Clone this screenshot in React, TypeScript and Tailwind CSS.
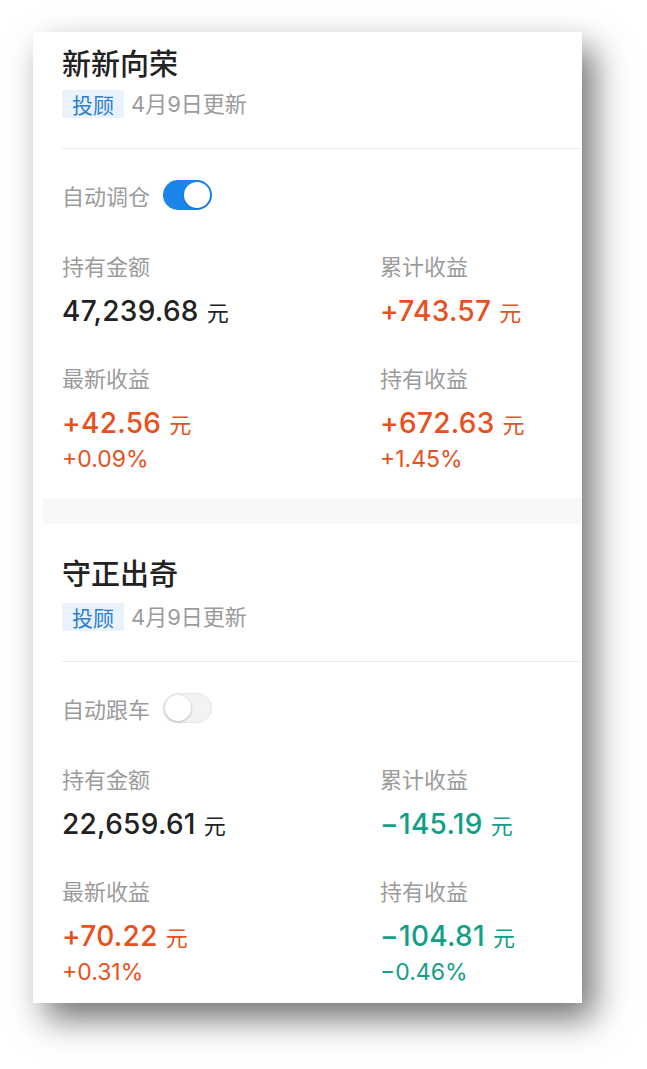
import React from "react";

type Tone = "dark" | "up" | "down";

const toneClass: Record<Tone, string> = {
  dark: "text-[#222222]",
  up: "text-[#e8501c]",
  down: "text-[#129f85]",
};

function Toggle({ on }: { on: boolean }) {
  return on ? (
    <div className="w-[49px] h-[30px] rounded-full bg-[#1a85e8] flex items-center justify-end pr-[2px]">
      <div className="w-[26px] h-[26px] rounded-full bg-white shadow-[0_1px_2px_rgba(0,0,0,0.2)]" />
    </div>
  ) : (
    <div className="w-[49px] h-[30px] rounded-full bg-[#f3f3f3] border border-[#e6e6e6] flex items-center pl-[1px]">
      <div className="w-[26px] h-[26px] rounded-full bg-white shadow-[0_1px_3px_rgba(0,0,0,0.25)]" />
    </div>
  );
}

function Stat({
  label,
  value,
  tone,
  pct,
}: {
  label: string;
  value: string;
  tone: Tone;
  pct?: string;
}) {
  return (
    <div className="flex flex-col">
      <div className="h-[30px] leading-[30px] text-[22px] text-[#9b9b9b] font-['Noto_Sans_CJK_SC',sans-serif]">
        {label}
      </div>
      <div className={`mt-[11px] h-[40px] leading-[40px] flex items-baseline ${toneClass[tone]}`}>
        <span className="text-[28px] font-medium font-['Inter','Liberation_Sans',sans-serif] tracking-[0.3px]">
          {value}
        </span>
        <span className="ml-[8px] text-[22px] font-['Noto_Sans_CJK_SC',sans-serif]">元</span>
      </div>
      {pct && (
        <div
          className={`mt-[1px] h-[30px] leading-[30px] text-[23px] font-['Inter','Liberation_Sans',sans-serif] ${toneClass[tone]}`}
        >
          {pct}
        </div>
      )}
    </div>
  );
}

function Card({
  title,
  toggleLabel,
  on,
  stats,
  topPad,
  tagGap,
  bottomPad,
  roundTop,
  roundBottom,
}: {
  title: string;
  toggleLabel: string;
  on: boolean;
  stats: { label: string; value: string; tone: Tone; pct?: string }[];
  topPad: string;
  tagGap: string;
  bottomPad: string;
  roundTop?: boolean;
  roundBottom?: boolean;
}) {
  return (
    <div
      className={`bg-white pl-[29px] ${topPad} ${bottomPad} ${roundTop ? "rounded-tl-[14px]" : ""} ${
        roundBottom ? "rounded-bl-[14px]" : ""
      }`}
    >
      <div className="h-[36px] leading-[36px] text-[29px] font-medium text-[#222222] font-['Noto_Sans_CJK_SC',sans-serif]">
        {title}
      </div>
      <div className={`${tagGap} flex items-center h-[28px]`}>
        <span className="h-[28px] leading-[28px] px-[10px] bg-[#eaf3fc] text-[#2a7fd2] text-[21px] font-['Noto_Sans_CJK_SC',sans-serif]">
          投顾
        </span>
        <span className="ml-[7px] text-[22px] text-[#9b9b9b] font-['Inter','Noto_Sans_CJK_SC',sans-serif]">
          4月9日更新
        </span>
      </div>
      <div className="mt-[30px] h-px bg-[#ececec]" />
      <div className="mt-[31px] flex items-center h-[30px]">
        <span className="text-[22px] text-[#9b9b9b] font-['Noto_Sans_CJK_SC',sans-serif]">{toggleLabel}</span>
        <div className="ml-[13px]">
          <Toggle on={on} />
        </div>
      </div>
      <div className="mt-[40px] grid grid-cols-[318px_1fr] gap-y-[31px]">
        {stats.map((s) => (
          <Stat key={s.label} {...s} />
        ))}
      </div>
    </div>
  );
}

export default function App() {
  return (
    <div className="w-[647px] h-[1069px] bg-white pt-[32px] pl-[33px]">
      <div className="w-[549px] h-[971px] overflow-hidden bg-white shadow-[12px_16px_32px_rgba(0,0,0,0.55)] flex flex-col">
        <Card
          title="新新向荣"
          toggleLabel="自动调仓"
          on
          topPad="pt-[12px]"
          tagGap="mt-[10px]"
          bottomPad="pb-[24px]"
          roundBottom
          stats={[
            { label: "持有金额", value: "47,239.68", tone: "dark" },
            { label: "累计收益", value: "+743.57", tone: "up" },
            { label: "最新收益", value: "+42.56", tone: "up", pct: "+0.09%" },
            { label: "持有收益", value: "+672.63", tone: "up", pct: "+1.45%" },
          ]}
        />
        <div className="h-[33px] ml-[10px] bg-[#f7f8fa]" />
        <Card
          title="守正出奇"
          toggleLabel="自动跟车"
          on={false}
          topPad="pt-[30px]"
          tagGap="mt-[13px]"
          bottomPad="pb-[16px]"
          roundTop
          stats={[
            { label: "持有金额", value: "22,659.61", tone: "dark" },
            { label: "累计收益", value: "−145.19", tone: "down" },
            { label: "最新收益", value: "+70.22", tone: "up", pct: "+0.31%" },
            { label: "持有收益", value: "−104.81", tone: "down", pct: "−0.46%" },
          ]}
        />
      </div>
    </div>
  );
}
